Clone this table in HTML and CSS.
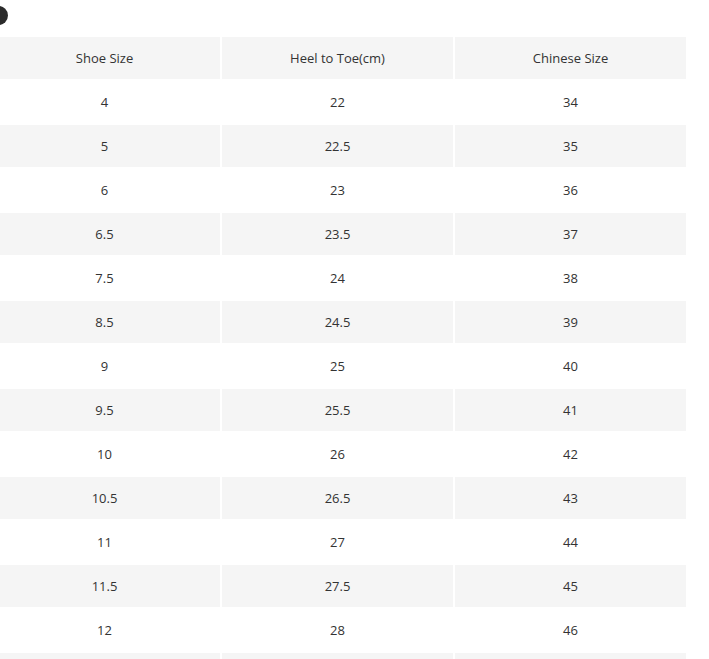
FILE: index.html
```html
<!DOCTYPE html>
<html>
<head>
<meta charset="utf-8">
<link rel="stylesheet" href="styles.css">
</head>
<body>
<div class="page">
  <div class="dot"></div>
  <table class="size-table">
    <thead>
      <tr><th>Shoe Size</th><th>Heel to Toe(cm)</th><th>Chinese Size</th></tr>
    </thead>
    <tbody>
      <tr><td>4</td><td>22</td><td>34</td></tr>
      <tr><td>5</td><td>22.5</td><td>35</td></tr>
      <tr><td>6</td><td>23</td><td>36</td></tr>
      <tr><td>6.5</td><td>23.5</td><td>37</td></tr>
      <tr><td>7.5</td><td>24</td><td>38</td></tr>
      <tr><td>8.5</td><td>24.5</td><td>39</td></tr>
      <tr><td>9</td><td>25</td><td>40</td></tr>
      <tr><td>9.5</td><td>25.5</td><td>41</td></tr>
      <tr><td>10</td><td>26</td><td>42</td></tr>
      <tr><td>10.5</td><td>26.5</td><td>43</td></tr>
      <tr><td>11</td><td>27</td><td>44</td></tr>
      <tr><td>11.5</td><td>27.5</td><td>45</td></tr>
      <tr><td>12</td><td>28</td><td>46</td></tr>
      <tr><td></td><td></td><td></td></tr>
    </tbody>
  </table>
</div>
</body>
</html>
```
FILE: styles.css
```css
html, body {
  margin: 0;
  padding: 0;
  background: #ffffff;
  overflow: hidden;
}
body {
  font-family: "Open Sans", "Noto Sans", sans-serif;
  font-size: 13px;
  color: #333333;
}
.page {
  padding-top: 6px;
  margin-left: -13px;
}
.dot {
  width: 19px;
  height: 19px;
  border-radius: 50%;
  background: #2b2b2b;
  margin-left: 2px;
  margin-bottom: 10px;
}
.size-table {
  border-collapse: separate;
  border-spacing: 2px;
  table-layout: fixed;
  width: 701px;
}
.size-table th,
.size-table td {
  height: 42px;
  padding: 0;
  text-align: center;
  vertical-align: middle;
  font-weight: 400;
  color: #333333;
}
.size-table th {
  background: #f5f5f5;
}
.size-table tbody tr:nth-child(even) td {
  background: #f5f5f5;
}
```
